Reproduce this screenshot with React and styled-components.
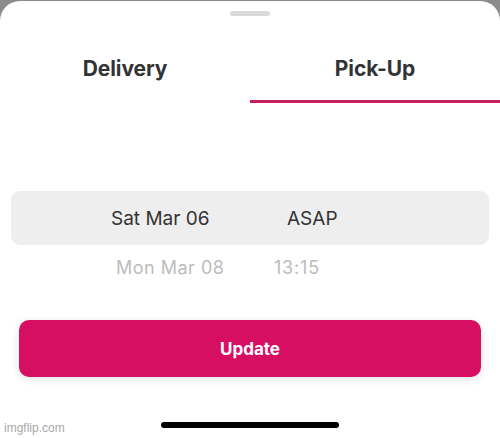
import React, { useState } from 'react';
import styled, { createGlobalStyle } from 'styled-components';

const GlobalStyle = createGlobalStyle`
  html, body {
    margin: 0;
    padding: 0;
    background: #8c8c8c;
    font-family: Inter, "Noto Sans", sans-serif;
  }
`;

const Sheet = styled.div`
  margin-top: 1px;
  height: 437px;
  background: #ffffff;
  border-radius: 20px 20px 0 0;
  display: flex;
  flex-direction: column;
  position: relative;
`;

const Handle = styled.div`
  align-self: center;
  width: 40px;
  height: 5px;
  margin-top: 10px;
  border-radius: 3px;
  background: #dadada;
`;

const Tabs = styled.div`
  display: flex;
  margin-top: 40px;
`;

const Tab = styled.button`
  flex: 1;
  border: none;
  background: none;
  padding: 0 0 19px;
  font-family: Inter, "Noto Sans", sans-serif;
  font-size: 21px;
  line-height: 25px;
  font-weight: 700;
  color: #333333;
  letter-spacing: -0.1px;
  border-bottom: 3px solid ${p => (p.active ? '#c81e63' : 'transparent')};
  cursor: pointer;
`;

const Picker = styled.div`
  margin: 88px 11px 0;
  display: flex;
  flex-direction: column;
`;

const Row = styled.div`
  display: grid;
  grid-template-columns: 264px 1fr;
  align-items: center;
  height: ${p => (p.selected ? '54px' : '44px')};
  background: ${p => (p.selected ? '#eeeeee' : 'transparent')};
  border-radius: 9px;
  color: ${p => (p.selected ? '#333333' : '#bcbcbc')};
  font-size: ${p => (p.selected ? '19px' : '18px')};
  font-family: Inter, "Noto Sans", sans-serif;
`;

const DateCell = styled.span`
  padding-left: ${p => (p.selected ? '100px' : '105px')};
  letter-spacing: ${p => (p.selected ? '0' : '0.5px')};
`;

const TimeCell = styled.span`
  margin-left: ${p => (p.selected ? '12px' : '-1px')};
  letter-spacing: ${p => (p.selected ? '0' : '0.8px')};
`;

const UpdateButton = styled.button`
  margin: 31px 19px 0;
  height: 57px;
  border: none;
  border-radius: 10px;
  background: #d60f63;
  color: #ffffff;
  font-family: Inter, "Noto Sans", sans-serif;
  font-size: 17px;
  font-weight: 700;
  box-shadow: 0 2px 8px rgba(0, 0, 0, 0.12);
  cursor: pointer;
`;

const Footer = styled.div`
  margin-top: auto;
  display: flex;
  justify-content: center;
  padding-bottom: 10px;
`;

const HomeBar = styled.div`
  width: 178px;
  height: 6px;
  border-radius: 3px;
  background: #000000;
`;

const Watermark = styled.span`
  position: absolute;
  left: 4px;
  bottom: 3px;
  font-family: "Liberation Sans", Arial, sans-serif;
  font-size: 12px;
  color: #a8a8a8;
`;

export default function App() {
  const [tab, setTab] = useState('pickup');

  return (
    <>
      <GlobalStyle />
      <Sheet>
        <Handle />
        <Tabs>
          <Tab active={tab === 'delivery'} onClick={() => setTab('delivery')}>
            Delivery
          </Tab>
          <Tab active={tab === 'pickup'} onClick={() => setTab('pickup')}>
            Pick-Up
          </Tab>
        </Tabs>
        <Picker>
          <Row selected>
            <DateCell selected>Sat Mar 06</DateCell>
            <TimeCell selected>ASAP</TimeCell>
          </Row>
          <Row>
            <DateCell>Mon Mar 08</DateCell>
            <TimeCell>13:15</TimeCell>
          </Row>
        </Picker>
        <UpdateButton>Update</UpdateButton>
        <Footer>
          <HomeBar />
        </Footer>
        <Watermark>imgflip.com</Watermark>
      </Sheet>
    </>
  );
}
